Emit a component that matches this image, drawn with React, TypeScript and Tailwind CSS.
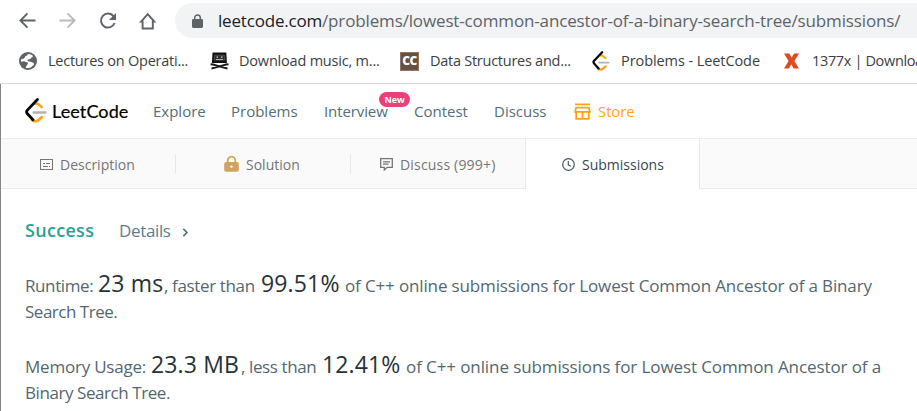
import React from 'react';

function LeetLogo({ className }: { className: string }) {
  return (
    <svg className={className} viewBox="0 0 22 25" fill="none" strokeLinecap="round">
      <path d="M10.5 5.8q1.5-.8 3 .4l3.2 2.9" stroke="#ffa116" strokeWidth="2.5" />
      <path d="M7 22q3.2 2.6 6.5.2l3.2-3" stroke="#ffa116" strokeWidth="2.8" />
      <path d="M8.7 14.5h11.6" stroke="#b3b3b3" strokeWidth="2.4" />
      <path d="M12.4 1.5L2.4 12.1q-1.6 1.8 0 3.6L8 21.8" stroke="#070706" strokeWidth="2.8" />
    </svg>
  );
}

function BrowserBar() {
  return (
    <div className="flex h-[41px] items-center text-[#5f6368]">
      <svg className="ml-[19px] size-[17px] shrink-0" viewBox="0 0 17 17" fill="none" stroke="#5f6368" strokeWidth="1.9">
        <path d="M16.5 8.5H1.6M8.5 1.4L1.4 8.5l7.1 7.1" />
      </svg>
      <svg className="ml-[23px] size-[17px] shrink-0" viewBox="0 0 17 17" fill="none" stroke="#b9bbbd" strokeWidth="1.9">
        <path d="M.5 8.5h14.9M8.5 1.4l7.1 7.1-7.1 7.1" />
      </svg>
      <svg className="ml-[23px] size-[18px] shrink-0" viewBox="0 0 18 18" fill="none">
        <path d="M14.6 4.3A7 7 0 1 0 15.6 11" stroke="#5f6368" strokeWidth="2" />
        <path d="M17 1v7h-7z" fill="#5f6368" />
      </svg>
      <svg className="ml-[22px] size-[18px] shrink-0" viewBox="0 0 18 18" fill="none" stroke="#5f6368" strokeWidth="1.9">
        <path d="M2.100 9.600L8.700 2.200l6.600 7.400h-1.500v6.900H3.600V9.600z" />
      </svg>
      <div className="ml-[18px] flex h-[35px] flex-1 items-center whitespace-nowrap rounded-l-full bg-[#f1f3f4] text-[17px]">
        <svg className="ml-[17px] mt-px h-[14px] w-[11px] shrink-0" viewBox="0 0 11 14">
          <path d="M2.7 6V3.7a2.8 2.8 0 0 1 5.6 0V6" fill="none" stroke="#5f6368" strokeWidth="1.5" />
          <rect y="4.9" width="11" height="9" rx="1.3" fill="#5f6368" />
        </svg>
        <span className="ml-[15px] w-[104px] shrink-0 tracking-[-0.19px] text-[#202124]">leetcode.com</span>
        <span className="tracking-[-0.14px]">/problems/lowest-common-ancestor-of-a-binary-search-tree/submissions/</span>
      </div>
    </div>
  );
}

function Bookmarks() {
  return (
    <div className="flex h-[42px] items-center whitespace-nowrap pb-[3px] text-[14.5px] text-[#3c4043]">
      <svg className="ml-[19px] size-[18px] shrink-0" viewBox="0 0 18 18">
        <circle cx="9" cy="9" r="9" fill="#5f6368" />
        <path d="M9.7 1.9C7.6 2.3 8 4 6.7 4.2 5.5 4.4 6 6 4.9 6.4l-2.7.8A7 7 0 0 0 2 9.8c1.3-.2 2.5-.8 4.2-.1 2 .7 3.8.8 2.5 2.4-.8 1-1.3 2.3-2.2 3.4A7 7 0 0 0 12.7 15c.4-1.4 2.6-1.3 2.2-3.4-.3-1.5-1.8-1-2.8-1.7-1.1-.7-2.4.1-3.4-.9-.8-.9.3-2 1.6-1.8 1.7.3 1.2-1.5 2.5-1.7 1-.2 1.1-1 .9-1.9a7 7 0 0 0-4-1.7z" fill="white" />
      </svg>
      <span className="ml-[11px] w-[140px] shrink-0 tracking-[-0.24px]">Lectures on Operati...</span>
      <svg className="ml-[22px] h-[18px] w-[19px] shrink-0" viewBox="0 0 19 18">
        <path d="M2.5.5h13.8l.6 10.5H1.9z" fill="#111" />
        <path d="M4.7 3.2h9.6l.7 4.9H4z" fill="#2c2c2c" stroke="#777" strokeWidth=".5" />
        <path d="M6.6 4.600h1.5v1.2H6.600zM11 4.600h1.5v1.2H11zM6 7h7v.8H6z" fill="#ddd" />
        <path d="M.6 12.300l2.500.2 6.400 1.800 6.500-1.800 2.500-.2M1.500 16.500l3.600-.8 4.400-1.400 4.400 1.400 3.600.8" fill="none" stroke="#171717" strokeWidth="1.900" />
      </svg>
      <span className="ml-[10px] w-[140px] shrink-0 tracking-[-0.2px]">Download music, m...</span>
      <span className="ml-[21px] mt-px flex size-[19px] shrink-0 items-center justify-center border border-[#8c7768] bg-[#69503f] text-[12px] leading-none font-extrabold tracking-[-0.5px] text-white">CC</span>
      <span className="ml-[11px] w-[140px] shrink-0 tracking-[-0.26px]">Data Structures and...</span>
      <LeetLogo className="ml-[22px] h-[20px] w-[18px] shrink-0" />
      <span className="ml-[11px] w-[138px] shrink-0 tracking-[-0.08px]">Problems - LeetCode</span>
      <svg className="ml-[25px] h-[16px] w-[15px] shrink-0" viewBox="0 0 15 16">
        <path d="M0 .5h5.400l2.300 4.300L10 .5h5L10.400 8l4.600 7.500H9.600l-2.300-4.300L5 15.500H0L4.600 8z" fill="#dd4b20" />
      </svg>
      <span className="ml-[13px] tracking-[-0.35px]">1377x | Download</span>
    </div>
  );
}

function NavBar() {
  return (
    <nav className="flex h-[55px] items-center whitespace-nowrap border-b border-[#eee] text-[15px] text-[#546e7a]">
      <LeetLogo className="ml-6 mb-px h-[25px] w-[22px] shrink-0" />
      <span className="ml-[5px] w-[77px] shrink-0 font-['Lato'] text-[18px] font-normal tracking-[0.1px] text-black [-webkit-text-stroke:0.2px_black]">LeetCode</span>
      <span className="ml-[24px] w-[53px]">Explore</span>
      <span className="ml-[25px] w-[67px]">Problems</span>
      <span className="relative ml-[26px] w-[65px] tracking-[-0.1px]">
        Interview
        <span className="absolute left-[55px] top-[-8px] flex h-[15px] w-[31px] items-center justify-center rounded-full bg-[#ec407a] text-[9px] font-bold text-white">New</span>
      </span>
      <span className="ml-[25px] w-[54px]">Contest</span>
      <span className="ml-[26px] w-[52px]">Discuss</span>
      <svg className="ml-[28px] size-[17px] shrink-0" viewBox="0 0 17 17" fill="none" stroke="#ffa116" strokeWidth="1.8">
        <path d="M1 1.300h15M2.100 4.600h12.800l1 4.300H1.100zM2.200 9v6.800h12.600V9M8.500 9v6.500" />
      </svg>
      <span className="ml-[7px] tracking-[-0.1px] text-[#ffa42a]">Store</span>
    </nav>
  );
}

function Tabs() {
  return (
    <div className="flex h-[50px] whitespace-nowrap text-[14px] text-[#757575]">
      <div className="flex w-[174px] items-center border-b border-[#ebebeb] bg-[#fafafa] pl-[39px] pt-0.5">
        <svg className="mr-[7px] h-[11px] w-[13px]" viewBox="0 0 13 11" fill="none" stroke="#757575" shapeRendering="crispEdges">
          <path d="M.5.5h12v10H.5z" />
          <path d="M3 4.5h2M6 4.5h4M3 7.5h5M9 7.5h1" />
        </svg>
        Description
      </div>
      <div className="flex w-[176px] items-center border-b border-[#ebebeb] bg-[#fafafa]">
        <div className="flex h-5 w-full items-center border-x border-[#e8e8e8] pl-[48px] pt-0.5">
          <svg className="mr-[7px] h-[16px] w-[15px] -translate-y-px" viewBox="0 0 15 16">
            <path d="M3.7 7V4.500a3.800 3.800 0 0 1 7.600 0V7" fill="none" stroke="#cfa45b" strokeWidth="1.8" />
            <rect x=".2" y="6" width="14.6" height="9.8" rx="2" fill="#cfa45b" />
            <circle cx="7.5" cy="10.6" r="1.2" fill="#fff" />
          </svg>
          Solution
        </div>
      </div>
      <div className="flex w-[174px] items-center border-b border-[#ebebeb] bg-[#fafafa] pl-[29px] pt-0.5">
        <svg className="mr-[7px] h-[13px] w-[13px]" viewBox="0 0 13 13" fill="none" stroke="#757575" strokeWidth="1.3">
          <path d="M.7.7h11.600v8.600H7.200L4.300 12V9.300H.7zM3 3.800h7M3 6.200h5.500" />
        </svg>
        <span className="tracking-[0.18px]">Discuss (999+)</span>
      </div>
      <div className="flex w-[175px] items-center border-x border-[#e8e8e8] bg-white pl-[36px] text-[#37474f]">
        <svg className="mr-[7px] size-[13px]" viewBox="0 0 13 13" fill="none" stroke="#455a64" strokeWidth="1.2">
          <circle cx="6.5" cy="6.5" r="5.8" />
          <path d="M6.300 3v3.800l2.500 1.400" />
        </svg>
        Submissions
      </div>
      <div className="flex-1 border-b border-[#ebebeb] bg-[#fafafa]" />
    </div>
  );
}

function Results() {
  return (
    <main className="whitespace-nowrap pl-6 text-[17px] leading-[26px] text-[#546770]">
      <div className="mt-[28px] flex h-[26px] items-baseline">
        <span className="w-[94px] text-[18px] font-semibold tracking-[0.3px] text-[#2aa198]">Success</span>
        <span className="w-[52px] tracking-[-0.35px] text-[#607d8b]">Details</span>
        <svg className="ml-[11px] h-[9px] w-[7px]" viewBox="0 0 7 9" fill="none" stroke="#546e7a" strokeWidth="1.6">
          <path d="M1.300.9L5 4.500 1.300 8.100" />
        </svg>
      </div>
      <div className="mt-[27px] flex h-[29px] items-baseline">
        <span className="w-[73px] tracking-[-0.4px]">Runtime:</span>
        <span className="w-[66px] text-[23px] tracking-[0.15px] text-[#263238]">23 ms</span>
        <span className="w-[97px] tracking-[-0.36px]">, faster than</span>
        <span className="w-[84px] text-[23px] tracking-[0.15px] text-[#263238]">99.51%</span>
        <span className="tracking-[-0.14px]">of C++ online submissions for Lowest Common Ancestor of a Binary</span>
      </div>
      <div className="h-[26px] tracking-[-0.49px]">Search Tree.</div>
      <div className="mt-[26px] flex h-[29px] items-baseline">
        <span className="w-[126px] tracking-[-0.22px]">Memory Usage:</span>
        <span className="w-[90px] text-[23px] tracking-[0.14px] text-[#263238]">23.3 MB</span>
        <span className="w-[81px] tracking-[-0.4px]">, less than</span>
        <span className="w-[84px] text-[23px] tracking-[0.1px] text-[#263238]">12.41%</span>
        <span className="tracking-[-0.1px]">of C++ online submissions for Lowest Common Ancestor of a</span>
      </div>
      <div className="h-[26px] tracking-[-0.43px]">Binary Search Tree.</div>
    </main>
  );
}

export default function App() {
  return (
    <div className="flex h-[411px] w-[917px] flex-col overflow-hidden bg-white font-['Open_Sans','Noto_Sans',sans-serif]">
      <BrowserBar />
      <Bookmarks />
      <div className="h-px shrink-0 bg-[#d5d6d8]" />
      <div className="flex-1 border-l border-[#858585]">
        <NavBar />
        <Tabs />
        <Results />
      </div>
    </div>
  );
}
